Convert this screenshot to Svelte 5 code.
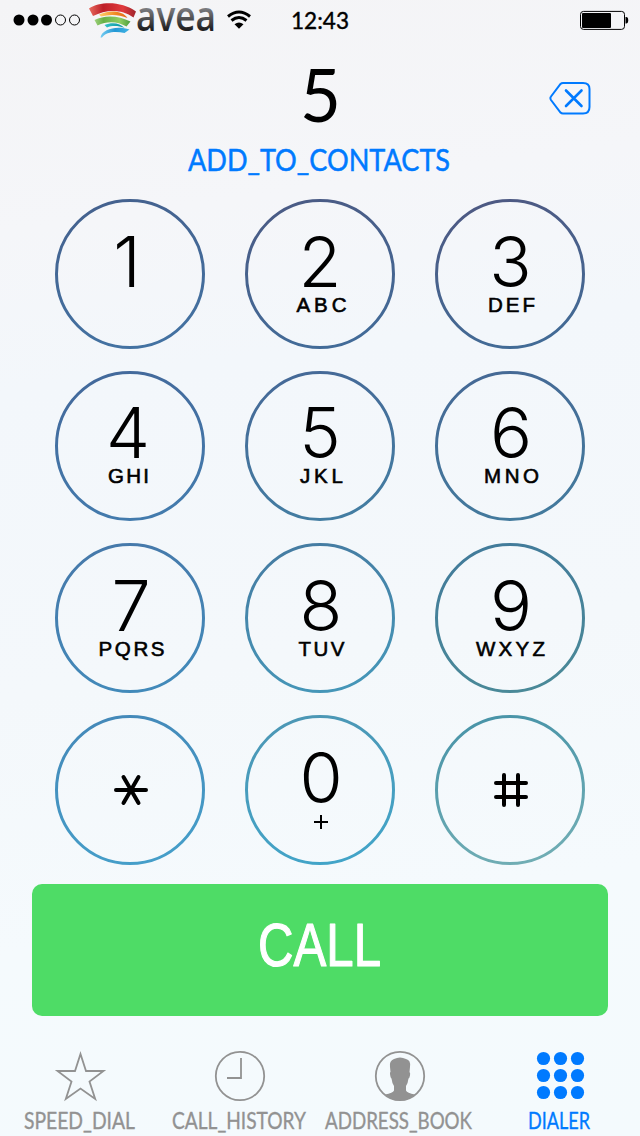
<script>
  const keys = [
    { digit: '1', letters: '', lw: 0, x: -3, lx: 0, top: '#44618e', bottom: '#4372a2' },
    { digit: '2', letters: 'ABC', lw: 49, x: 0, lx: 1, top: '#4a5b85', bottom: '#426b98' },
    { digit: '3', letters: 'DEF', lw: 46, x: 0.5, lx: 1, top: '#4d5983', bottom: '#426b96' },
    { digit: '4', letters: 'GHI', lw: 40, x: -2, lx: -2, top: '#43699b', bottom: '#437bad' },
    { digit: '5', letters: 'JKL', lw: 42, x: 0, lx: 1, top: '#456997', bottom: '#437da2' },
    { digit: '6', letters: 'MNO', lw: 54, x: 1, lx: 1, top: '#456995', bottom: '#437a9d' },
    { digit: '7', letters: 'PQRS', lw: 65, x: 1, lx: 1, top: '#4679aa', bottom: '#428aba' },
    { digit: '8', letters: 'TUV', lw: 45, x: 1, lx: 1, top: '#457ca2', bottom: '#4596b8' },
    { digit: '9', letters: 'WXYZ', lw: 68, x: 1, lx: 0, top: '#427b9a', bottom: '#4a8998' },
    { digit: '*', letters: '', top: '#4489b9', bottom: '#459ec9' },
    { digit: '0', letters: '+', x: 1, top: '#4c97b5', bottom: '#42a4c8' },
    { digit: '#', letters: '', top: '#4994a8', bottom: '#70adb4' }
  ];
  const tabs = [
    { id: 'star', text: 'SPEED_DIAL', w: 111, x: -1 },
    { id: 'clock', text: 'CALL_HISTORY', w: 134, x: -1 },
    { id: 'person', text: 'ADDRESS_BOOK', w: 147, x: -2 },
    { id: 'grid', text: 'DIALER', w: 62, x: -1 }
  ];
</script>

{#snippet hand(text, w, size, height, base, bold)}
  <svg class="hand" width={w} {height}>
    <text x="0" y={base} font-size={size} textLength={w} lengthAdjust="spacingAndGlyphs" stroke-width={bold}>{text}</text>
  </svg>
{/snippet}

<main>
  <header>
    <svg class="signal" width="68" height="12">
      <circle cx="6" cy="6" r="5.5" /><circle cx="20" cy="6" r="5.5" /><circle cx="33.5" cy="6" r="5.5" />
      <circle class="empty" cx="47.5" cy="6" r="5" /><circle class="empty" cx="61.5" cy="6" r="5" />
    </svg>
    <svg class="logo" width="128" height="40" viewBox="0 0 128 40">
      <defs>
        <linearGradient id="red"><stop stop-color="#e76b5e" /><stop offset=".3" stop-color="#bd1e28" /><stop offset=".72" stop-color="#e13a3d" /><stop offset="1" stop-color="#9e242b" /></linearGradient>
        <linearGradient id="orange"><stop stop-color="#ffd16d" /><stop offset=".6" stop-color="#f18820" /><stop offset="1" stop-color="#e26b1f" /></linearGradient>
        <linearGradient id="green"><stop stop-color="#9fd17c" /><stop offset=".25" stop-color="#67b046" /><stop offset=".7" stop-color="#8fce62" /><stop offset="1" stop-color="#4b9d3e" /></linearGradient>
        <linearGradient id="teal"><stop stop-color="#33c2c6" /><stop offset="1" stop-color="#078f9e" /></linearGradient>
        <linearGradient id="blue"><stop stop-color="#76cdf2" /><stop offset=".5" stop-color="#2397d4" /><stop offset="1" stop-color="#42b5e6" /></linearGradient>
        <linearGradient id="ink" x1="0" y1="0" x2="0" y2="1"><stop offset=".35" stop-color="#858588" /><stop offset=".75" stop-color="#202022" /></linearGradient>
      </defs>
      <path fill="url(#red)" d="M0 8.5C11 1 33 1 47 11.5L44.5 17.5C32 8.5 17 9.5 4 16Z" />
      <path fill="url(#orange)" d="M10 14.5C22 9.5 34 11 38.5 18C30 14.5 21 14 12 16.5Z" />
      <path fill="url(#green)" d="M5.5 20C16 14.5 30 15.5 41.5 21.5L37.5 26.5C28 21 18 21 8.5 25.5Z" />
      <path fill="url(#teal)" d="M15.5 25C24 21.5 31 23.5 35.5 28C29 25.5 23 25.5 18 27.5Z" />
      <path fill="url(#blue)" d="M11.5 37.5C13 29 28 25.5 40.5 29.5L35.5 33C27 31 17 31.5 13 37.5Z" />
      <text x="47" y="31" textLength="80" lengthAdjust="spacingAndGlyphs" fill="url(#ink)">avea</text>
    </svg>
    <svg class="wifi" width="26" height="20" viewBox="0 0 26 20">
      <path d="M2 6.5Q13 -2.5 24 6.5M5.5 10.5Q13 4.5 20.5 10.5" />
      <path class="tip" d="M8.5 14.3Q13 10.8 17.5 14.3L13 18.8Z" />
    </svg>
    <span class="time">{@render hand('12:43', 58, 23.5, 20, 18, 0.4)}</span>
    <svg class="battery" width="50" height="20" viewBox="0 0 50 20">
      <rect x="1.5" y="1.4" width="44" height="18" rx="3" />
      <rect class="charge" x="3" y="3" width="29" height="15" rx="1" />
      <path d="M46.5 7h.7q2 0 2 3.3t-2 3.3h-.7z" />
    </svg>
  </header>

  <section class="number">
    <div class="typed">{@render hand('5', 41, 73, 56, 54, 0)}</div>
    <svg class="erase" width="42" height="34" viewBox="0 0 42 34">
      <path d="M14 2H34Q40.5 2 40.5 8V26Q40.5 32.5 34 32.5H14Q12.5 32.5 11.5 31.5L2 19Q.8 17 2 15.5L11.5 3Q12.5 2 14 2Z" />
      <path class="cross" d="M17 9.5L32.5 25M32.5 9.5L17 25" />
    </svg>
    <a class="add" href="#add">{@render hand('ADD_TO_CONTACTS', 262, 30.5, 26, 23, 0.5)}</a>
  </section>

  <section class="pad">
    {#each keys as k, i}
      <svg class="key" width="150" height="150" viewBox="0 0 150 150">
        <defs>
          <linearGradient id="ring{i}" x1=".35" y1="0" x2=".55" y2="1"><stop stop-color={k.top} /><stop offset="1" stop-color={k.bottom} /></linearGradient>
        </defs>
        <circle cx="75" cy="75" r="73.5" stroke="url(#ring{i})" />
        {#if k.digit === '*'}
          <path class="symbol" d="M61 75H91M68.5 62L83.5 88M83.5 62L68.5 88" />
        {:else if k.digit === '#'}
          <path class="symbol" d="M61 68H91M61 82H91M69 60V90M83 60V90" />
        {:else}
          <text class="digit" x={75 + k.x} y={i > 2 && i < 6 ? 87 : 88} text-anchor="middle">{k.digit}</text>
          {#if k.letters === '+'}
            <path class="plus" d="M69 107H83M76 100V114" />
          {:else if k.letters}
            <text class="letters" x={75 + k.lx - k.lw / 2} y={i > 2 && i < 6 ? 112 : 113} textLength={k.lw + 1}>{k.letters}</text>
          {/if}
        {/if}
      </svg>
    {/each}
  </section>

  <button class="call">{@render hand('CALL', 123, 62, 46, 45, 1.2)}</button>

  <nav>
    {#each tabs as t}
      <div class="tab" class:active={t.id === 'grid'}>
        <svg width="56" height="54" viewBox="0 0 56 54">
          {#if t.id === 'star'}
            <path d="M28.5 6L34 23H51.5L37.5 33.5L43.2 51L28.5 40.5L13.8 51L19.5 33.5L5.5 23H23Z" />
          {:else if t.id === 'clock'}
            <circle cx="28" cy="28" r="24.2" />
            <path d="M29 10V30H15" />
          {:else if t.id === 'person'}
            <circle cx="28" cy="28" r="24.2" />
            <path class="fill" d="M18 19Q17 13 22 11Q28 8 34 11Q39 12 38 19L37.5 24Q38.5 24.5 38 27.5Q37.5 30 36.5 30.5Q36 35 34 38V42.5Q35 45 43 46.5Q37 52.5 28 52.5Q19 52.5 13 46.5Q21 45 22 42.5V38Q20 35 19.5 30.5Q18.5 30 18 26Q17.8 24 18.5 24Z" />
          {:else}
            {#each [10.5, 27.5, 44.5] as y}{#each [11.5, 28.5, 45.5] as x}<circle class="fill" cx={x} cy={y} r="6.6" />{/each}{/each}
          {/if}
        </svg>
        <span style:margin-left="{t.x * 2}px">{@render hand(t.text, t.w, 22.5, 20, 18, 0.35)}</span>
      </div>
    {/each}
  </nav>
</main>

<style>
  :global(body) { margin: 0; }
  main { width: 640px; height: 1136px; display: flex; flex-direction: column; overflow: hidden; background: linear-gradient(172deg, #f4f4f6 0%, #f5f6f9 19%, #f3f7fb 32%, #f4f8fb 57%, #f5fafd 78%, #f4fafd 100%); font-family: Lato, sans-serif; }
  svg { display: block; flex: none; }
  .hand { overflow: visible; }
  .hand text { fill: currentColor; stroke: currentColor; stroke-linejoin: round; }
  header { height: 40px; display: flex; align-items: center; padding: 0 11px 0 13px; box-sizing: border-box; }
  .empty { fill: none; stroke: #000; stroke-width: 1; }
  .logo { margin-left: 8px; overflow: visible; }
  .logo text { font: 600 41px "Open Sans", sans-serif; }
  .wifi { margin-left: 9px; }
  .wifi path { fill: none; stroke: #000; stroke-width: 3; }
  .wifi .tip { fill: #000; stroke: none; }
  .time { margin: 2px auto 0 39px; }
  .battery rect { fill: none; stroke: #000; stroke-width: 1; }
  .battery .charge { fill: #000; stroke: none; }
  .number { height: 159px; display: grid; grid-template-columns: 1fr auto 1fr; grid-template-rows: 108px 51px; justify-items: center; }
  .typed { grid-column: 2; padding-top: 28px; }
  .erase { justify-self: end; margin: 41px 49px 0 0; fill: none; stroke: #007aff; stroke-width: 2; }
  .cross { stroke-linecap: round; stroke-width: 2.6; }
  .add { grid-column: 1 / -1; color: #007aff; margin-left: -2px; }
  .pad { display: grid; grid-template-columns: repeat(3, 150px); gap: 22px 40px; justify-content: center; }
  .key > circle { fill: none; stroke-width: 3; }
  .symbol { fill: none; stroke: #000; stroke-width: 4; stroke-linecap: round; }
  .plus { fill: none; stroke: #000; stroke-width: 2; }
  .digit { font: 300 70px Inter, sans-serif; letter-spacing: 0; }
  .letters { font: 400 20.5px "Liberation Sans", sans-serif; stroke: #000; stroke-width: 0.6; }
  .call { margin: 19px 32px 0; height: 132px; padding: 0 2px 13px 0; display: flex; align-items: center; justify-content: center; border: 0; border-radius: 10px; background: #4edc66; color: #fff; }
  nav { margin-top: 32px; display: grid; grid-template-columns: repeat(4, 160px); color: #929292; }
  .tab { display: flex; flex-direction: column; align-items: center; gap: 9px; }
  .tab > svg { fill: none; stroke: currentColor; stroke-width: 1.8; }
  .tab .fill { fill: currentColor; stroke: none; }
  .active { color: #007aff; }
</style>
